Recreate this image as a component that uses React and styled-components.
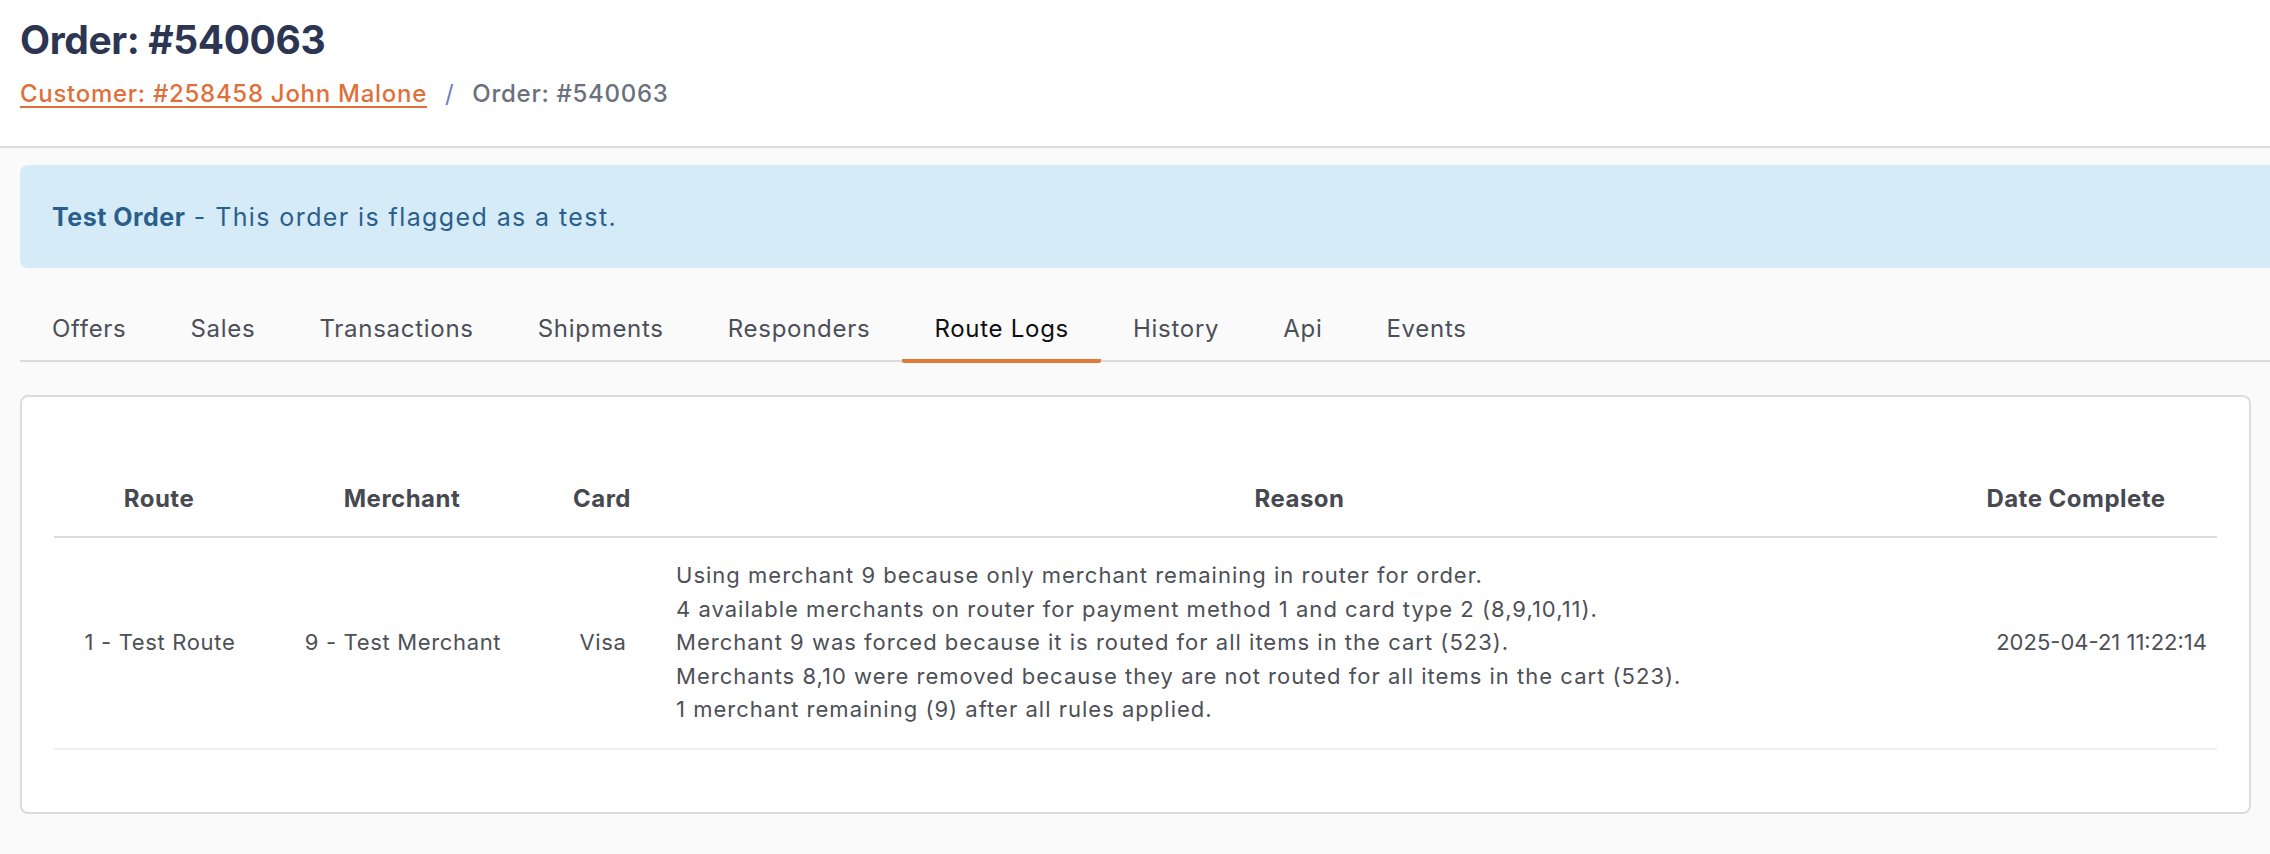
import styled, { createGlobalStyle } from "styled-components"

const GlobalStyle = createGlobalStyle`
  html, body {
    margin: 0;
    padding: 0;
    background: #fafafa;
    font-family: "Inter", "Noto Sans", sans-serif;
    overflow: hidden;
  }
`

const tabs = ["Offers", "Sales", "Transactions", "Shipments", "Responders", "Route Logs", "History", "Api", "Events"]

const reasons = [
  "Using merchant 9 because only merchant remaining in router for order.",
  "4 available merchants on router for payment method 1 and card type 2 (8,9,10,11).",
  "Merchant 9 was forced because it is routed for all items in the cart (523).",
  "Merchants 8,10 were removed because they are not routed for all items in the cart (523).",
  "1 merchant remaining (9) after all rules applied.",
]

export default function App() {
  return (
    <Page>
      <GlobalStyle />
      <Header>
        <Title>Order: #540063</Title>
        <Breadcrumb>
          <CrumbLink href="#">Customer: #258458 John Malone</CrumbLink>
          <Slash>/</Slash>
          <Current>Order: #540063</Current>
        </Breadcrumb>
      </Header>

      <Content>
        <Alert>
          <strong>Test Order</strong> - This order is flagged as a test.
        </Alert>

        <TabBar>
          {tabs.map((t) => (
            <Tab key={t} $active={t === "Route Logs"}>{t}</Tab>
          ))}
        </TabBar>

        <Card>
          <Table>
            <colgroup>
              <col style={{ width: 210 }} />
              <col style={{ width: 276 }} />
              <col style={{ width: 124 }} />
              <col />
              <col style={{ width: 282 }} />
            </colgroup>
            <thead>
              <tr>
                <Th>Route</Th>
                <Th>Merchant</Th>
                <Th>Card</Th>
                <Th>Reason</Th>
                <Th>Date Complete</Th>
              </tr>
            </thead>
            <tbody>
              <tr>
                <Td>1 - Test Route</Td>
                <Td>9 - Test Merchant</Td>
                <Td>Visa</Td>
                <Td $align="left" $spacing="0.046em">
                  {reasons.map((r) => (
                    <div key={r}>{r}</div>
                  ))}
                </Td>
                <Td $align="right" $spacing="0">2025-04-21 11:22:14</Td>
              </tr>
            </tbody>
          </Table>
        </Card>
      </Content>
    </Page>
  )
}

const Page = styled.div`
  min-height: 854px;
  background: #fafafa;
`

const Header = styled.header`
  background: #fff;
  padding: 16px 20px 36px;
  border-bottom: 2px solid #dcdcdc;
`

const Title = styled.h1`
  margin: 0;
  font-size: 39px;
  line-height: 48px;
  font-weight: 700;
  color: #2c3552;
  letter-spacing: -0.01em;
`

const Breadcrumb = styled.div`
  margin-top: 14px;
  display: flex;
  align-items: center;
  font-size: 24px;
  line-height: 32px;
  font-weight: 500;
  letter-spacing: 0.03em;
`

const CrumbLink = styled.a`
  color: #e0703a;
  text-decoration: underline;
  text-underline-offset: 4px;
  text-decoration-thickness: 2px;
`

const Slash = styled.span`
  color: #6b7fc2;
  margin: 0 18px;
  font-weight: 400;
`

const Current = styled.span`
  color: #6b717c;
`

const Content = styled.main`
  padding: 17px 0 0 20px;
`

const Alert = styled.div`
  background: #d6ebf8;
  color: #2b5f8b;
  border-radius: 8px 0 0 8px;
  height: 103px;
  display: flex;
  align-items: center;
  padding-left: 32px;
  font-size: 25px;
  letter-spacing: 0.056em;
  white-space: pre;

  strong {
    font-weight: 700;
    letter-spacing: 0.02em;
  }
`

const TabBar = styled.nav`
  display: flex;
  margin-top: 31px;
  border-bottom: 2px solid #dcdcdc;
`

const Tab = styled.div`
  padding: 14px 32px 14px;
  font-size: 24px;
  line-height: 32px;
  letter-spacing: 0.03em;
  color: ${(p) => (p.$active ? "#0f0f10" : "#4b4f58")};
  border-bottom: 4px solid ${(p) => (p.$active ? "#e07a3a" : "transparent")};
  margin-bottom: -3px;
  border-radius: 2px;
`

const Card = styled.section`
  margin: 33px 19px 0 0;
  background: #fff;
  border: 2px solid #dcdcdc;
  border-radius: 8px;
  padding: 65px 32px 62px;
`

const Table = styled.table`
  width: 100%;
  border-collapse: collapse;
  table-layout: fixed;
`

const Th = styled.th`
  padding: 21px 12px;
  font-size: 24px;
  line-height: 32px;
  font-weight: 700;
  color: #464950;
  text-align: center;
  border-bottom: 2px solid #dcdcdc;
  letter-spacing: 0.02em;
`

const Td = styled.td`
  padding: 21px 10px 21px 12px;
  font-size: 22px;
  line-height: 33.5px;
  color: #4d5057;
  text-align: ${(p) => p.$align || "center"};
  vertical-align: middle;
  border-bottom: 2px solid #efefef;
  letter-spacing: ${(p) => p.$spacing || "0.03em"};
  white-space: nowrap;
`
